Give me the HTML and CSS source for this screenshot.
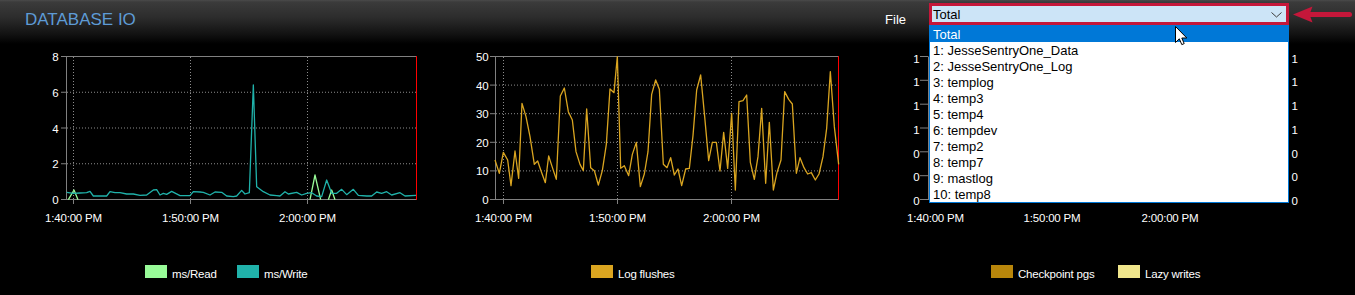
FILE: index.html
```html
<!DOCTYPE html>
<html>
<head>
<meta charset="utf-8">
<title>Database IO</title>
<link rel="stylesheet" href="styles.css">
</head>
<body>
<div class="page">
  <header class="hdr">
    <h1 class="title">DATABASE IO</h1>
    <div class="filebar">
      <span class="file-label">File</span>
      <div class="select">
        <span class="select-text">Total</span>
        <svg class="chev" width="11" height="6" viewBox="0 0 11 6"><polyline points="0.5,0.5 5.5,5 10.5,0.5" fill="none" stroke="#3c3c3c" stroke-width="1"/></svg>
      </div>
      <svg class="callout" width="60" height="17" viewBox="0 0 60 17">
        <rect x="14" y="6" width="45" height="5" rx="2.5" fill="#c5173a"/>
        <path d="M0 8.5 L19.5 0.5 L16.5 8.5 L19.5 16.5 Z" fill="#c5173a"/>
      </svg>
    </div>
  </header>

  <section class="charts">
    <div class="panel p1">
      <svg class="chart" width="451" height="186" viewBox="0 44 451 186">
        <g class="grid">
          <line x1="67" y1="92.25" x2="416" y2="92.25"/>
          <line x1="67" y1="128" x2="416" y2="128"/>
          <line x1="67" y1="163.75" x2="416" y2="163.75"/>
          <line x1="73.5" y1="57" x2="73.5" y2="199"/>
          <line x1="190.5" y1="57" x2="190.5" y2="199"/>
          <line x1="307.5" y1="57" x2="307.5" y2="199"/>
        </g>
        <g class="axis">
          <line x1="66" y1="56.5" x2="416" y2="56.5"/>
          <line x1="66.5" y1="56.5" x2="66.5" y2="200"/>
          <line x1="61" y1="199.5" x2="416" y2="199.5"/>
          <line x1="61" y1="56.5" x2="66" y2="56.5"/>
          <line x1="61" y1="92.25" x2="66" y2="92.25"/>
          <line x1="61" y1="128" x2="66" y2="128"/>
          <line x1="61" y1="163.75" x2="66" y2="163.75"/>
          <line x1="73.5" y1="199.5" x2="73.5" y2="204"/>
          <line x1="190.5" y1="199.5" x2="190.5" y2="204"/>
          <line x1="307.5" y1="199.5" x2="307.5" y2="204"/>
        </g>
        <line class="edge" x1="416.5" y1="56" x2="416.5" y2="200"/>
        <g transform="translate(0 50) scale(0.333333)">
          <polyline class="s-read" points="205,449 222,420 234,449"/>
          <polyline class="s-read" points="930,449 945,375 962,449"/>
          <polyline class="s-read" points="985,449 995,420 1005,449"/>
          <polyline class="s-write" points="200,427 220,430 240,429 260,428 270,424 280,438 300,438 320,438 330,425 345,428 360,428 380,432 400,432 420,436 440,435 460,420 470,419 480,435 490,430 500,433 515,424 540,437 570,437 580,425 600,426 610,427 630,435 645,426 665,427 680,438 700,440 710,438 725,421 735,432 748,428 760,105 770,410 790,425 810,435 830,437 840,438 855,425 865,432 890,427 905,435 920,430 935,428 950,438 965,440 980,390 995,430 1010,430 1025,418 1040,434 1060,418 1075,436 1100,438 1115,438 1130,426 1145,430 1160,425 1175,435 1200,428 1215,438 1248,436"/>
        </g>
        <g class="ylab">
          <text x="58.5" y="61">8</text>
          <text x="58.5" y="97">6</text>
          <text x="58.5" y="132.5">4</text>
          <text x="58.5" y="168">2</text>
          <text x="58.5" y="204">0</text>
        </g>
        <g class="xlab">
          <text x="73.5" y="222">1:40:00 PM</text>
          <text x="190.5" y="222">1:50:00 PM</text>
          <text x="307.5" y="222">2:00:00 PM</text>
        </g>
      </svg>
      <div class="legend">
        <div class="li li-read"><span class="sw c-read"></span><span>ms/Read</span></div>
        <div class="li"><span class="sw c-write"></span><span>ms/Write</span></div>
      </div>
    </div>

    <div class="panel p2">
      <svg class="chart" width="451" height="186" viewBox="451 44 451 186">
        <g class="grid">
          <line x1="496" y1="85.1" x2="838" y2="85.1"/>
          <line x1="496" y1="113.7" x2="838" y2="113.7"/>
          <line x1="496" y1="142.3" x2="838" y2="142.3"/>
          <line x1="496" y1="170.9" x2="838" y2="170.9"/>
          <line x1="503.5" y1="57" x2="503.5" y2="199"/>
          <line x1="617.5" y1="57" x2="617.5" y2="199"/>
          <line x1="731.5" y1="57" x2="731.5" y2="199"/>
        </g>
        <g class="axis">
          <line x1="495" y1="56.5" x2="838" y2="56.5"/>
          <line x1="495.5" y1="56.5" x2="495.5" y2="200"/>
          <line x1="490" y1="199.5" x2="838" y2="199.5"/>
          <line x1="490" y1="56.5" x2="495" y2="56.5"/>
          <line x1="490" y1="85.1" x2="495" y2="85.1"/>
          <line x1="490" y1="113.7" x2="495" y2="113.7"/>
          <line x1="490" y1="142.3" x2="495" y2="142.3"/>
          <line x1="490" y1="170.9" x2="495" y2="170.9"/>
          <line x1="503.5" y1="199.5" x2="503.5" y2="204"/>
          <line x1="617.5" y1="199.5" x2="617.5" y2="204"/>
          <line x1="731.5" y1="199.5" x2="731.5" y2="204"/>
        </g>
        <line class="edge" x1="838.5" y1="56" x2="838.5" y2="200"/>
        <g transform="translate(440 50) scale(0.333333)">
          <polyline class="s-log" points="165,330 178,370 190,307 203,330 213,407 225,303 236,385 246,160 258,200 270,260 283,343 293,333 304,365 316,398 326,318 338,355 349,388 361,138 373,114 385,185 397,210 408,305 420,343 430,362 440,177 452,353 463,362 475,405 487,362 499,283 510,117 522,128 532,20 542,355 553,347 566,377 577,313 589,277 601,410 613,372 624,305 635,133 647,90 658,118 670,343 681,353 692,323 703,375 714,357 725,407 737,357 748,355 759,257 770,120 782,75 794,200 806,332 817,277 829,277 840,363 851,247 863,355 875,190 886,420 897,155 909,152 920,135 931,337 943,388 954,320 965,175 977,400 988,217 1000,420 1011,368 1023,330 1034,125 1046,148 1057,162 1069,370 1080,323 1092,353 1103,372 1114,368 1126,390 1137,372 1149,320 1160,235 1171,65 1183,230 1196,343"/>
        </g>
        <g class="ylab">
          <text x="488.5" y="61">50</text>
          <text x="488.5" y="89.5">40</text>
          <text x="488.5" y="118">30</text>
          <text x="488.5" y="146.5">20</text>
          <text x="488.5" y="175">10</text>
          <text x="488.5" y="204">0</text>
        </g>
        <g class="xlab">
          <text x="503.5" y="222">1:40:00 PM</text>
          <text x="617.5" y="222">1:50:00 PM</text>
          <text x="731.5" y="222">2:00:00 PM</text>
        </g>
      </svg>
      <div class="legend">
        <div class="li"><span class="sw c-log"></span><span>Log flushes</span></div>
      </div>
    </div>

    <div class="panel p3">
      <svg class="chart" width="453" height="186" viewBox="902 44 453 186">
        <g class="axis">
          <line x1="928.5" y1="56.5" x2="928.5" y2="200"/>
          <line x1="920" y1="199.5" x2="1289" y2="199.5"/>
          <line x1="920" y1="56.5" x2="928" y2="56.5"/>
          <line x1="920" y1="80.3" x2="928" y2="80.3"/>
          <line x1="920" y1="104.2" x2="928" y2="104.2"/>
          <line x1="920" y1="128" x2="928" y2="128"/>
          <line x1="920" y1="151.8" x2="928" y2="151.8"/>
          <line x1="920" y1="175.7" x2="928" y2="175.7"/>
        </g>
        <g class="ylab">
          <text x="919.5" y="63">1</text>
          <text x="919.5" y="86">1</text>
          <text x="919.5" y="109.5">1</text>
          <text x="919.5" y="133.5">1</text>
          <text x="919.5" y="157.5">0</text>
          <text x="919.5" y="181">0</text>
          <text x="919.5" y="205">0</text>
        </g>
        <g class="ylab-r">
          <text x="1291.5" y="63">1</text>
          <text x="1291.5" y="86">1</text>
          <text x="1291.5" y="109.5">1</text>
          <text x="1291.5" y="133.5">1</text>
          <text x="1291.5" y="157.5">0</text>
          <text x="1291.5" y="181">0</text>
          <text x="1291.5" y="205">0</text>
        </g>
        <g class="xlab">
          <text x="935.5" y="222">1:40:00 PM</text>
          <text x="1052" y="222">1:50:00 PM</text>
          <text x="1170" y="222">2:00:00 PM</text>
        </g>
      </svg>
      <div class="legend">
        <div class="li li-ckpt"><span class="sw c-ckpt"></span><span>Checkpoint pgs</span></div>
        <div class="li"><span class="sw c-lazy"></span><span>Lazy writes</span></div>
      </div>
    </div>
  </section>

  <ul class="droplist">
    <li class="sel">Total</li>
    <li>1: JesseSentryOne_Data</li>
    <li>2: JesseSentryOne_Log</li>
    <li>3: templog</li>
    <li>4: temp3</li>
    <li>5: temp4</li>
    <li>6: tempdev</li>
    <li>7: temp2</li>
    <li>8: temp7</li>
    <li>9: mastlog</li>
    <li>10: temp8</li>
  </ul>

  <svg class="cursor" width="13" height="20" viewBox="0 0 13 20">
    <path d="M0.5 0.5 L0.5 16.5 L4.3 12.8 L6.8 18.6 L9.2 17.6 L6.8 12 L11.8 12 Z" fill="#fff" stroke="#000" stroke-width="1" stroke-linejoin="miter"/>
  </svg>
</div>
</body>
</html>
```

FILE: styles.css
```css
html, body {
  margin: 0;
  padding: 0;
  background: #000;
}

body {
  width: 1355px;
  height: 295px;
  overflow: hidden;
  font-family: "Liberation Sans", Arial, sans-serif;
  color: #fff;
}

.page {
  position: relative;
  width: 1355px;
  height: 295px;
}

/* ---------- header ---------- */
.hdr {
  display: flex;
  align-items: flex-start;
  height: 44px;
  background: linear-gradient(to bottom, #4a4a4a 0, #3b3b3b 2px, #2c2c2c 40%, #141414 75%, #000 100%);
}

.title {
  margin: 10px 0 0 25px;
  font-size: 17px;
  line-height: 19px;
  font-weight: normal;
  color: #5e9bd6;
}

.filebar {
  display: flex;
  align-items: flex-start;
  margin-left: auto;
  margin-right: 2px;
}

.file-label {
  margin-top: 12px;
  margin-right: 23px;
  font-size: 13px;
  line-height: 15px;
  color: #fff;
}

.select {
  display: flex;
  align-items: center;
  box-sizing: border-box;
  width: 360px;
  height: 22px;
  margin-top: 3px;
  padding: 0 4px 0 1px;
  border: 3px solid #c5173a;
  background: #cce4f7;
  color: #000;
  font-size: 13px;
  line-height: 16px;
}

.select-text {
  flex: 1;
  padding-top: 1px;
}

.chev {
  display: block;
  margin-top: 1px;
}

.callout {
  display: block;
  margin-top: 6px;
  margin-left: 4px;
}

/* ---------- charts ---------- */
.charts {
  display: flex;
}

.panel {
  display: flex;
  flex-direction: column;
}

.chart {
  display: block;
}

.chart .grid line {
  stroke: #8c8c8c;
  stroke-width: 1;
  stroke-dasharray: 1 2;
}

.chart .axis line {
  stroke: #808080;
  stroke-width: 1;
}

.chart .edge {
  stroke: #ff0000;
  stroke-width: 1;
}

.chart polyline {
  fill: none;
  stroke-width: 1.3;
  stroke-linejoin: round;
  vector-effect: non-scaling-stroke;
}

.s-read { stroke: #98fb98; }
.s-write { stroke: #20b2aa; }
.s-log { stroke: #daa520; }

.chart text {
  font-family: "Liberation Sans", Arial, sans-serif;
  font-size: 11.5px;
  letter-spacing: -0.2px;
  fill: #fff;
}

.chart .ylab text { text-anchor: end; }
.chart .ylab-r text { text-anchor: start; }
.chart .xlab text { text-anchor: middle; }

/* ---------- legends ---------- */
.legend {
  display: flex;
  align-items: baseline;
  margin-top: 35px;
  height: 13px;
  font-size: 11.5px;
  letter-spacing: -0.2px;
  line-height: 13px;
  color: #fff;
}

.p1 .legend { padding-left: 145px; }
.p2 .legend { padding-left: 140px; }
.p3 .legend { padding-left: 89px; }

.li {
  display: flex;
  align-items: baseline;
}

.li-read { width: 92px; }
.li-ckpt { width: 127px; }

.sw {
  display: inline-block;
  width: 22px;
  height: 13px;
  margin-right: 5px;
}

.c-read { background: #98fb98; }
.c-write { background: #20b2aa; }
.c-log { background: #daa520; }
.c-ckpt { background: #b8860b; }
.c-lazy { background: #f0e68c; }

/* ---------- open dropdown (overlay) ---------- */
.droplist {
  position: absolute;
  left: 929px;
  top: 25px;
  box-sizing: border-box;
  width: 360px;
  margin: 0;
  padding: 0;
  list-style: none;
  border: 1px solid #0078d7;
  background: #fff;
  font-size: 13px;
  line-height: 16px;
  color: #000;
}

.droplist li {
  box-sizing: border-box;
  height: 16px;
  padding-top: 1px;
  padding-left: 3px;
  line-height: 16px;
  white-space: nowrap;
  overflow: hidden;
}

.droplist li.sel {
  background: #0078d7;
  color: #fff;
}

.cursor {
  position: absolute;
  left: 1175px;
  top: 26px;
}
```
